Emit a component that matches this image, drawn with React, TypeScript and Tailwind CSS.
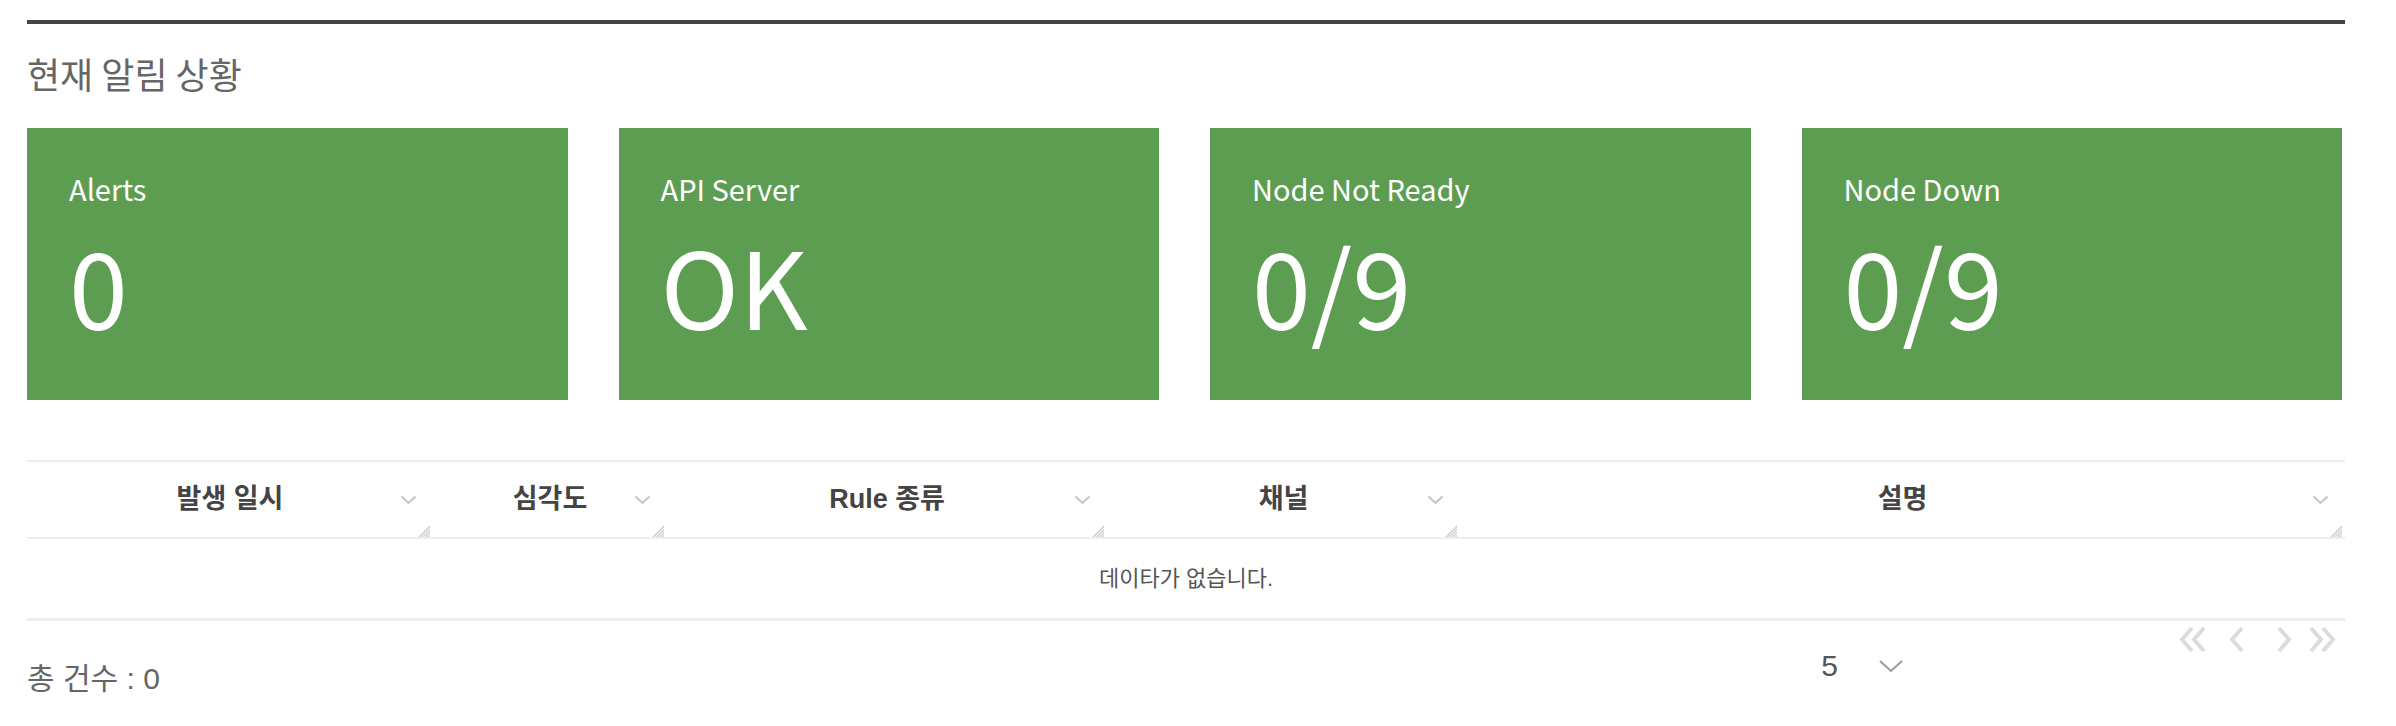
import { useState } from "react";

const CARDS = [
  { label: "Alerts", value: "0" },
  { label: "API Server", value: "OK" },
  { label: "Node Not Ready", value: "0/9" },
  { label: "Node Down", value: "0/9" },
];

const COLUMNS = ["발생 일시", "심각도", "Rule 종류", "채널", "설명"];

function SortChevron() {
  return (
    <svg width="17" height="10" viewBox="0 0 17 10" className="absolute right-[16px] top-[33px]">
      <path d="M1.5 1.5 L8.5 8 L15.5 1.5" fill="none" stroke="#c4c4c4" strokeWidth="2" />
    </svg>
  );
}

function ResizeGrip() {
  return (
    <svg width="12" height="12" viewBox="0 0 12 12" className="absolute bottom-0 right-[3px]">
      <path d="M12 0 L12 12 L0 12 Z" fill="#d6d6d6" />
      <path d="M12 3 L3 12 M12 6 L6 12 M12 9 L9 12" stroke="#ffffff" strokeWidth="0.8" />
    </svg>
  );
}

function Chevron({ dir }: { dir: "left" | "right" }) {
  const d = dir === "left" ? "M14 2 L4 13.5 L14 25" : "M2 2 L12 13.5 L2 25";
  return (
    <svg width="16" height="27" viewBox="0 0 16 27">
      <path d={d} fill="none" stroke="#dcdcdc" strokeWidth="4" />
    </svg>
  );
}

function DoubleChevron({ dir }: { dir: "left" | "right" }) {
  return (
    <div className="flex">
      <Chevron dir={dir} />
      <div className="-ml-[4px]">
        <Chevron dir={dir} />
      </div>
    </div>
  );
}

export default function App() {
  const [pageSize] = useState(5);

  return (
    <div className="min-h-[726px] bg-white pl-[27px] pr-[51px] pt-[20px] font-[family-name:'Noto_Sans_CJK_KR',sans-serif]">
      <div className="h-[4px] bg-[#444444]" />
      <h2 className="mt-[27px] text-[36px] leading-[44px] text-[#666666]">현재 알림 상황</h2>

      <div className="mr-[3px] mt-[33px] grid grid-cols-4 gap-[51px]">
        {CARDS.map((card) => (
          <div key={card.label} className="h-[272px] bg-[#5d9d51] pl-[42px] pt-[42px] text-white">
            <div className="text-[29px] leading-[36px]">{card.label}</div>
            <div className="mt-[25px] text-[106px] leading-[106px]">{card.value}</div>
          </div>
        ))}
      </div>

      <div className="mt-[60px] border-t-2 border-[#eeeeee] font-[family-name:'Liberation_Sans','Noto_Sans_CJK_KR',sans-serif]">
        <div className="grid grid-cols-[406px_234px_440px_353px_1fr] border-b-2 border-[#eeeeee]">
          {COLUMNS.map((col) => (
            <div key={col} className="relative flex h-[75px] items-center justify-center">
              <span className="text-[27px] font-bold text-[#444444]">{col}</span>
              <SortChevron />
              <ResizeGrip />
            </div>
          ))}
        </div>
        <div className="flex h-[82px] items-center justify-center border-b-[3px] border-[#eeeeee] text-[22px] text-[#555555]">
          데이타가 없습니다.
        </div>

        <div className="flex items-start justify-between">
          <span className="mt-[40px] text-[30px] leading-[36px] text-[#666666]">총 건수 : 0</span>
          <div className="flex items-start pr-[8px]">
            <div className="mt-[27px] flex items-center">
              <span className="text-[30px] leading-[36px] text-[#555555]">{pageSize}</span>
              <svg width="26" height="14" viewBox="0 0 26 14" className="ml-[40px]">
                <path d="M2 2 L13 12 L24 2" fill="none" stroke="#9a9a9a" strokeWidth="2" />
              </svg>
            </div>
            <div className="ml-[274px] mt-[5px] flex items-center">
              <DoubleChevron dir="left" />
              <div className="ml-[22px]">
                <Chevron dir="left" />
              </div>
              <div className="ml-[33px]">
                <Chevron dir="right" />
              </div>
              <div className="ml-[16px]">
                <DoubleChevron dir="right" />
              </div>
            </div>
          </div>
        </div>
      </div>
    </div>
  );
}
